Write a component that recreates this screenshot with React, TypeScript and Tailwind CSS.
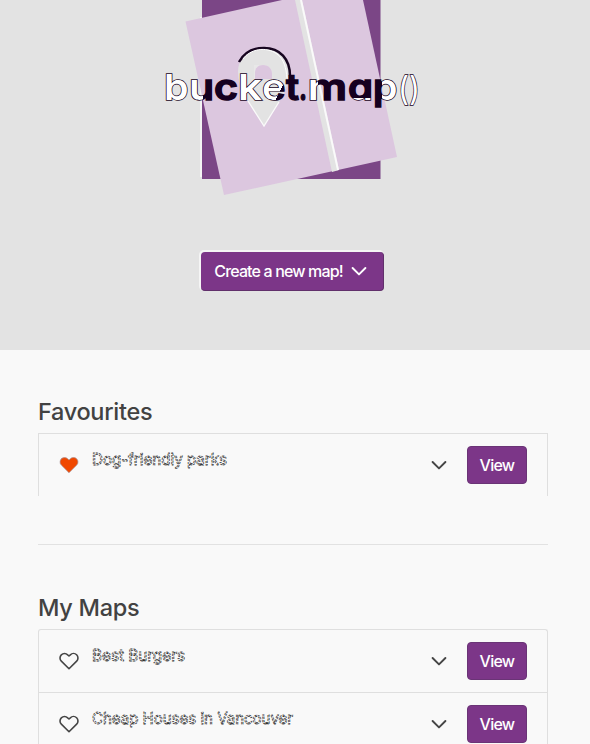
import React from 'react';

function Chevron({ className = '' }: { className?: string }) {
  return (
    <svg className={className} width="22" height="22" viewBox="0 0 24 24" fill="none" stroke="currentColor" strokeWidth="2.1" strokeLinecap="round" strokeLinejoin="round">
      <path d="M19 8.7l-7 7-7-7" />
    </svg>
  );
}

function Heart({ filled }: { filled?: boolean }) {
  return (
    <svg width="24" height="24" viewBox="0 0 24 24" fill={filled ? '#f04800' : 'none'} stroke={filled ? '#a88f92' : '#454545'} strokeWidth={filled ? 0.7 : 1.6} strokeLinecap="round" strokeLinejoin="round">
      <path d="M4.318 5.818a4.4 4.4 0 000 6.264L12 19.764l7.682-7.682a4.4 4.4 0 00-6.364-6.264L12 7.036l-1.318-1.218a4.5 4.5 0 00-6.364 0z" />
    </svg>
  );
}

const letters = [
  { ch: 'b', x: 164, w: 24.5, fill: '#fff' },
  { ch: 'u', x: 189, w: 25, fill: 'url(#halfU)' },
  { ch: 'c', x: 214, w: 24, fill: '#150020' },
  { ch: 'k', x: 238, w: 24, fill: '#fff' },
  { ch: 'e', x: 262, w: 23.5, fill: 'url(#halfE)' },
  { ch: 't', x: 286, w: 13, fill: '#150020' },
  { ch: '.', x: 299, w: 8, fill: '#150020' },
  { ch: 'm', x: 307.5, w: 39.5, fill: 'url(#halfM)' },
  { ch: 'a', x: 348, w: 25, fill: 'url(#halfA)' },
  { ch: 'p', x: 373, w: 24.5, fill: 'url(#halfP)' },
];

function Logo() {
  return (
    <svg className="block" width="280" height="200" viewBox="150 0 280 200">
      <defs>
        <linearGradient id="halfU"><stop offset="0.55" stopColor="#fff" /><stop offset="0.55" stopColor="#150020" /></linearGradient>
        <linearGradient id="halfE" x2="1" y2="1"><stop offset="0.68" stopColor="#fff" /><stop offset="0.68" stopColor="#150020" /></linearGradient>
        <linearGradient id="halfM"><stop offset="0.26" stopColor="#fff" /><stop offset="0.26" stopColor="#150020" /></linearGradient>
        <linearGradient id="halfA" x2="0" y2="1"><stop offset="0.74" stopColor="#150020" /><stop offset="0.74" stopColor="#fff" /></linearGradient>
        <linearGradient id="halfP"><stop offset="0.35" stopColor="#150020" /><stop offset="0.35" stopColor="#fff" /></linearGradient>
      </defs>
      <path d="M202 0H380.5V179H202Z" fill="#7b4686" />
      <path d="M201 17V177" stroke="#fafafa" strokeWidth="1.5" />
      <path d="M185.5 21.5L282 0H363L397 157L224 195Z" fill="#dcc7df" />
      <path d="M295 0H302L339 170L332 172Z" fill="#e3e3e3" />
      <path d="M301 0L338 170" stroke="#fafafa" strokeWidth="2" />
      <path d="M238 72C238 58 249 48 264 48C280 48 289 59 289 75C289 88 276 108 264 126C254 110 238 91 238 72Z" fill="#e3e3e3" />
      <path d="M239 62C244 53 253 48 264 48C280 48 290 59 290 76V97" fill="none" stroke="#170520" strokeWidth="2.5" />
      <path d="M243 59C250 49 266 46 277 54C284 59 286 68 287 78" fill="none" stroke="#fff" strokeWidth="1" />
      <path d="M254 79V65H258C260 65 261 65 263 65C269 65 272 69 272 74V79Z" fill="#e8e8e8" />
      <path d="M255 79V73C255 68 258 65 263 65C269 65 272 69 272 74V79Z" fill="#dcc7df" />
      <path d="M248 101L264 126L279 102" fill="none" stroke="#fafafa" strokeWidth="1.3" />
      <g stroke="#150020" strokeWidth="1.4" className="font-['Inter','Liberation_Sans',sans-serif] text-[36px] font-semibold [font-feature-settings:'cv11'] [paint-order:stroke]">
        {letters.map((l) => (
          <text key={l.x} x={l.x} y="100" textLength={l.w} lengthAdjust="spacingAndGlyphs" fill={l.fill}>{l.ch}</text>
        ))}
        <text x="398" y="100" textLength="11" lengthAdjust="spacingAndGlyphs" fill="#fff" className="text-[33px] font-normal">(</text>
        <text x="409" y="100" textLength="11" lengthAdjust="spacingAndGlyphs" fill="#fff" className="text-[33px] font-normal">)</text>
      </g>
    </svg>
  );
}

function Row({ label, width, filled }: { label: string; width: number; filled?: boolean }) {
  return (
    <div className="flex h-[63px] items-start pl-[18px] pr-5 pt-3">
      <div className="mt-[7px] h-6 w-6"><Heart filled={filled} /></div>
      <svg className="ml-[11px] mt-[1px] block h-7 shrink-0 overflow-visible" width={width + 12} height="28">
        <text x="0" y="18" textLength={width} lengthAdjust="spacingAndGlyphs" fill="#fff" stroke="#333" strokeWidth="0.8" strokeDasharray="2.4 1" className="font-['Inter','Liberation_Sans',sans-serif] text-[16px] font-normal">{label}</text>
      </svg>
      <Chevron className="ml-auto mt-2 text-[#454545]" />
      <button className="ml-[17px] h-[38px] w-[60px] rounded-[4px] border border-[#6a3476] bg-[#7c3688] font-['Inter','Liberation_Sans',sans-serif] text-[16px] font-medium tracking-[-0.75px] text-white">View</button>
    </div>
  );
}

export default function App() {
  return (
    <div className="h-[744px] w-full overflow-hidden bg-[#f9f9f9] font-['Inter','Liberation_Sans',sans-serif] text-[#424242]">
      <header className="flex h-[350px] flex-col items-center bg-[#e3e3e3]">
        <div className="-ml-[10px]"><Logo /></div>
        <button className="-ml-[5px] mt-[52px] flex h-[39px] w-[183px] items-center rounded-[4px] border-b border-r border-[#61306b] bg-[#7c3688] pl-[13px] text-[16px] font-medium text-white shadow-[-1px_-1px_0_1px_#f5f5f5]">
          <span className="w-[129px] whitespace-nowrap tracking-[-0.85px]">Create a new map!</span>
          <Chevron className="ml-[5px]" />
        </button>
      </header>
      <main className="ml-[38px] w-[510px]">
        <section className="pt-12">
          <h2 className="h-[35px] text-[23.5px] font-medium leading-7 tracking-[-0.3px]">Favourites</h2>
          <div className="h-[63px] border-x border-t border-[#dfdfdf]"><Row label="Dog-friendly parks" width={135} filled /></div>
        </section>
        <div className="mt-12 h-px bg-[#e2e2e2]" />
        <section className="pt-[49px]">
          <h2 className="h-[35px] text-[23.5px] font-medium leading-7 tracking-[-0.3px]">My Maps</h2>
          <div className="rounded-t-[3px] border-x border-t border-[#dfdfdf]">
            <div className="h-[63px] border-b border-[#dfdfdf]"><Row label="Best Burgers" width={93} /></div>
            <Row label="Cheap Houses in Vancouver" width={201} />
          </div>
        </section>
      </main>
    </div>
  );
}
